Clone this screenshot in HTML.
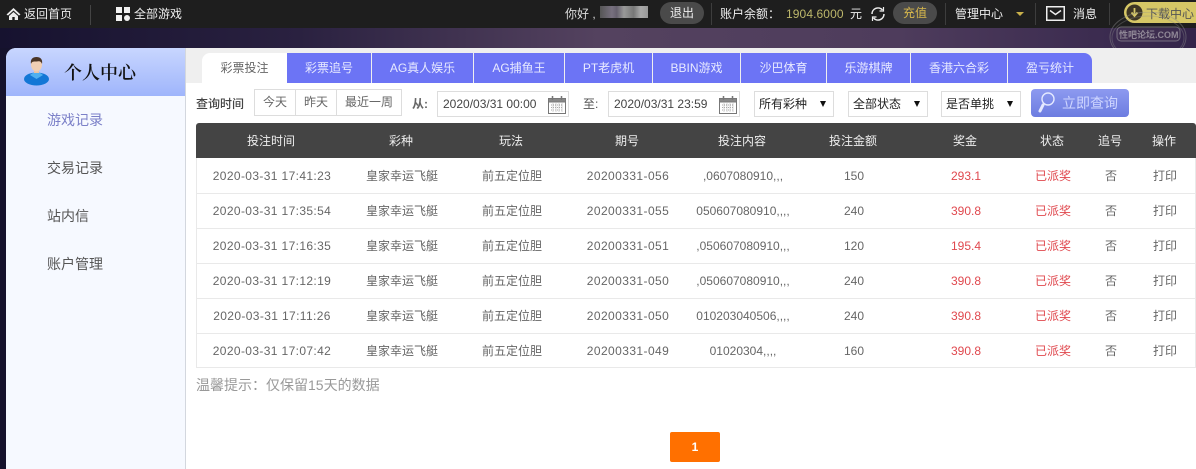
<!DOCTYPE html>
<html lang="zh">
<head>
<meta charset="utf-8">
<style>
*{box-sizing:border-box;margin:0;padding:0}
html,body{width:1196px;height:469px;overflow:hidden}
body{position:relative;background:#fff;font-family:"Liberation Sans","Noto Sans CJK SC",sans-serif;font-size:12px;color:#555}
.a{position:absolute;white-space:nowrap}
#top{left:0;top:0;width:1196px;height:28px;background:#1e1e1e}
#band{left:0;top:28px;width:1196px;height:20px;background:linear-gradient(90deg,#16122f 0%,#2a2140 25%,#54425f 50%,#4e3c5c 75%,#33244a 100%)}
#leftdark{left:0;top:48px;width:18px;height:421px;background:#15122c}
#side{left:6px;top:48px;width:180px;height:421px;background:#f6f9ff;border-right:1px solid #d3d7de;border-top-left-radius:10px;overflow:hidden}
#sidehead{left:0;top:0;width:179px;height:48px;background:linear-gradient(180deg,#c8d6ff,#9fb5fb)}
#strip{left:186px;top:48px;width:1010px;height:35px;background:#efefef}
.tab{position:absolute;top:53px;height:30px;background:#6c74f5;color:#e8eaff;line-height:30px;text-align:center;font-size:12px}
.box{position:absolute;top:89px;height:27px;border:1px solid #ddd;background:#fff;line-height:25px;text-align:center;color:#666;font-size:12px}
.sel{position:absolute;top:91px;height:26px;border:1px solid #ddd;background:#fff;line-height:24px;color:#222;font-size:12px;padding-left:4px}
.sel i{position:absolute;right:7px;top:9px;width:0;height:0;border-left:3px solid transparent;border-right:3px solid transparent;border-top:6px solid #111}
#thead{left:196px;top:123px;width:1000px;height:35px;background:#444;border-radius:3px 3px 0 0}
.th{position:absolute;top:133px;color:#eee;font-size:12px;line-height:16px;transform:translateX(-50%);white-space:nowrap}
.line{position:absolute;left:196px;width:1000px;height:1px;background:#e9e9e9}
.td{position:absolute;font-size:12px;line-height:16px;color:#666;transform:translateX(-50%);white-space:nowrap}
.dt{letter-spacing:.37px}
.is{letter-spacing:.42px}
.r{color:#e0484e}
.sm{position:absolute;left:47px;font-size:14px;color:#555;line-height:20px}
</style>
</head>
<body>
<div class="a" id="top"></div>
<div class="a" id="band"></div>
<div class="a" id="leftdark"></div>

<svg class="a" style="left:6px;top:7px" width="15" height="14" viewBox="0 0 15 14"><path d="M7.500 1L0.500 7.500L2 8.500L7.500 3.500L13 8.500L14.500 7.500ZM3 9V13H6.300V10H8.700V13H12V9L7.500 5Z" fill="#eee"/></svg>
<div class="a" style="left:24px;top:6px;color:#eee;line-height:16px">返回首页</div>
<div class="a" style="left:90px;top:5px;width:1px;height:20px;background:#444"></div>
<svg class="a" style="left:116px;top:7px" width="14" height="14"><rect x="0" y="0" width="6" height="6" fill="#f2f2f2"/><rect x="8" y="0" width="6" height="6" fill="#f2f2f2"/><rect x="0" y="8" width="6" height="6" fill="#f2f2f2"/><circle cx="11" cy="11" r="3" fill="#f2f2f2"/></svg>
<div class="a" style="left:134px;top:6px;color:#eee;line-height:16px">全部游戏</div>

<div class="a" style="left:565px;top:6px;color:#ddd;line-height:16px">你好 ,</div>
<div class="a" style="left:600px;top:6px;width:48px;height:12px;background:linear-gradient(90deg,#555,#77707f 25%,#66606e 35%,#999 50%,#777 70%,#aaa 85%,#999)"></div>
<div class="a" style="left:660px;top:2px;width:44px;height:22px;border-radius:11px;background:#4a4a4a;color:#eee;text-align:center;line-height:22px">退出</div>
<div class="a" style="left:711px;top:3px;width:1px;height:22px;background:#3d3d3d"></div>
<div class="a" style="left:720px;top:6px;color:#eee;line-height:16px">账户余额：</div>
<div class="a" style="left:786px;top:6px;color:#bdb76b;line-height:16px;letter-spacing:.1px">1904.6000</div>
<div class="a" style="left:850px;top:6px;color:#eee;line-height:16px">元</div>
<svg class="a" style="left:870px;top:6px" width="16" height="16" viewBox="0 0 16 16" fill="none" stroke="#eee" stroke-width="1.500"><path d="M2 8A6 6 0 0 1 12.500 4M14 8A6 6 0 0 1 3.500 12"/><path d="M13.500 1V5H9.500M2.500 15V11H6.500" stroke-width="1.200"/></svg>
<div class="a" style="left:893px;top:2px;width:44px;height:22px;border-radius:11px;background:#4a4a4a;color:#d9b94c;text-align:center;line-height:22px">充值</div>
<div class="a" style="left:945px;top:3px;width:1px;height:22px;background:#3d3d3d"></div>
<div class="a" style="left:955px;top:6px;color:#eee;line-height:16px">管理中心</div>
<div class="a" style="left:1016px;top:12px;width:0;height:0;border-left:4px solid transparent;border-right:4px solid transparent;border-top:4px solid #c9b04a"></div>
<div class="a" style="left:1035px;top:3px;width:1px;height:22px;background:#3d3d3d"></div>
<svg class="a" style="left:1046px;top:6px" width="19" height="15" fill="none" stroke="#eee"><rect x="0.750" y="0.750" width="17.500" height="13.500" stroke-width="1.500"/><path d="M4 4.500L9.500 8.500L15 4.500" stroke-width="1.500"/></svg>
<div class="a" style="left:1073px;top:6px;color:#eee;line-height:16px">消息</div>
<div class="a" style="left:1109px;top:3px;width:1px;height:22px;background:#3d3d3d"></div>
<div class="a" style="left:1124px;top:2px;width:72px;height:21px;border-radius:11px 0 0 11px;background:#d6c766"></div>
<svg class="a" style="left:1124px;top:2px" width="21" height="21"><circle cx="10.500" cy="10.500" r="8" fill="#3d3524"/><path d="M10.500 6V13M7.500 10.500L10.500 14L13.500 10.500" stroke="#d6c766" stroke-width="1.800" fill="none"/></svg>
<div class="a" style="left:1146px;top:6px;color:#555;line-height:16px">下载中心</div>
<svg class="a" style="left:1108px;top:12px" width="82" height="54" fill="none" stroke="#8b8b8b" stroke-width="1"><ellipse cx="40" cy="25" rx="38" ry="25" opacity=".45"/><ellipse cx="40" cy="26" rx="36" ry="22" opacity=".35"/><rect x="9" y="15" width="63" height="14" rx="4" fill="#4a3a58" fill-opacity=".4" stroke="#8f8a96" stroke-opacity=".7"/></svg>
<div class="a" style="left:1119px;top:28px;color:#8f8796;font-size:9px;line-height:14px;font-weight:bold">性吧论坛.COM</div>

<div class="a" id="side">
  <div class="a" id="sidehead"></div>
</div>
<svg class="a" style="left:22px;top:55px" width="30" height="31" viewBox="0 0 30 31"><ellipse cx="14.500" cy="24" rx="12.500" ry="6.500" fill="#1377d6"/><path d="M8 20C10 18 12 18 13 17H16C17 18 19 18 21 20L14.500 24Z" fill="#4fb0f0"/><rect x="12" y="13" width="5" height="5" fill="#e8c2a4"/><ellipse cx="14.500" cy="9.500" rx="5.500" ry="7" fill="#f0cfb4"/><path d="M9 9C8 4 11 2 14.500 2C18 2 21 4 20 9C19 6 17 6 14.500 6.500C12 6.500 10 6 9 9Z" fill="#4a3526"/></svg>
<div class="a" style="left:64px;top:60px;font-size:18px;line-height:24px;color:#111;font-weight:600;font-family:'Noto Serif CJK SC','Liberation Serif',serif">个人中心</div>
<div class="sm" style="top:110px;color:#7b80c8">游戏记录</div>
<div class="sm" style="top:158px">交易记录</div>
<div class="sm" style="top:206px">站内信</div>
<div class="sm" style="top:254px">账户管理</div>

<div class="a" id="strip"></div>
<div class="tab" style="left:202px;width:85px;background:#fff;color:#666;border-radius:8px 0 0 0">彩票投注</div>
<div class="tab" style="left:287px;width:84px">彩票追号</div>
<div class="tab" style="left:372px;width:101px">AG真人娱乐</div>
<div class="tab" style="left:474px;width:90px">AG捕鱼王</div>
<div class="tab" style="left:565px;width:87px">PT老虎机</div>
<div class="tab" style="left:653px;width:87px">BBIN游戏</div>
<div class="tab" style="left:741px;width:85px">沙巴体育</div>
<div class="tab" style="left:827px;width:83px">乐游棋牌</div>
<div class="tab" style="left:911px;width:96px">香港六合彩</div>
<div class="tab" style="left:1008px;width:84px;border-radius:0 8px 0 0">盈亏统计</div>

<div class="a" style="left:196px;top:96px;color:#444;line-height:16px;font-weight:500">查询时间</div>
<div class="box" style="left:254px;width:42px">今天</div>
<div class="box" style="left:295px;width:42px">昨天</div>
<div class="box" style="left:336px;width:66px">最近一周</div>
<div class="a" style="left:412px;top:96px;color:#666;line-height:16px;font-weight:bold">从:</div>
<div class="sel" style="left:437px;width:132px;color:#444;padding-left:5px">2020/03/31 00:00</div>
<svg class="a" style="left:547px;top:95px" width="20" height="19" fill="none" stroke="#777"><rect x="1.500" y="3.500" width="17" height="15"/><path d="M1.500 3.500H18.500V7H1.500Z" fill="#888"/><path d="M5.500 1V5M14.500 1V5" stroke-width="1.500"/><path d="M4 10H16M4 12.500H16M4 15H16M6 8.500V17M9 8.500V17M12 8.500V17M15 8.500V17" stroke="#aaa" stroke-dasharray="1 1"/></svg>
<div class="a" style="left:583px;top:96px;color:#555;line-height:16px">至:</div>
<div class="sel" style="left:608px;width:132px;color:#444;padding-left:5px">2020/03/31 23:59</div>
<svg class="a" style="left:718px;top:95px" width="20" height="19" fill="none" stroke="#777"><rect x="1.500" y="3.500" width="17" height="15"/><path d="M1.500 3.500H18.500V7H1.500Z" fill="#888"/><path d="M5.500 1V5M14.500 1V5" stroke-width="1.500"/><path d="M4 10H16M4 12.500H16M4 15H16M6 8.500V17M9 8.500V17M12 8.500V17M15 8.500V17" stroke="#aaa" stroke-dasharray="1 1"/></svg>
<div class="sel" style="left:754px;width:80px">所有彩种<i></i></div>
<div class="sel" style="left:848px;width:80px">全部状态<i></i></div>
<div class="sel" style="left:941px;width:80px">是否单挑<i></i></div>
<div class="a" style="left:1031px;top:89px;width:98px;height:28px;border-radius:4px;background:linear-gradient(180deg,#8d9af0,#6c7ce0);color:#cfd6ff;font-size:14px;line-height:28px;padding-left:31px">立即查询</div>
<svg class="a" style="left:1037px;top:91px" width="20" height="24" fill="none"><circle cx="11" cy="8" r="6" stroke="#e4e9ff" stroke-width="1.400"/><path d="M6 14L3 20" stroke="#e4e9ff" stroke-width="3" stroke-linecap="round"/></svg>

<div class="a" id="thead"></div>
<div class="th" style="left:271px">投注时间</div>
<div class="th" style="left:401px">彩种</div>
<div class="th" style="left:511px">玩法</div>
<div class="th" style="left:627px">期号</div>
<div class="th" style="left:742px">投注内容</div>
<div class="th" style="left:853px">投注金额</div>
<div class="th" style="left:965px">奖金</div>
<div class="th" style="left:1052px">状态</div>
<div class="th" style="left:1110px">追号</div>
<div class="th" style="left:1164px">操作</div>

<div class="a" style="left:196px;top:158px;width:1px;height:210px;background:#e9e9e9"></div>
<div class="a" style="left:1195px;top:158px;width:1px;height:210px;background:#e9e9e9"></div>
<div class="line" style="top:193px"></div>
<div class="line" style="top:228px"></div>
<div class="line" style="top:263px"></div>
<div class="line" style="top:298px"></div>
<div class="line" style="top:333px"></div>
<div class="line" style="top:367px"></div>

<div class="td dt" style="left:272px;top:168px">2020-03-31 17:41:23</div><div class="td" style="left:402px;top:168px">皇家幸运飞艇</div><div class="td" style="left:512px;top:168px">前五定位胆</div><div class="td is" style="left:628px;top:168px">20200331-056</div><div class="td" style="left:743px;top:168px">,0607080910,,,</div><div class="td" style="left:854px;top:168px">150</div><div class="td r" style="left:966px;top:168px">293.1</div><div class="td r" style="left:1053px;top:168px">已派奖</div><div class="td" style="left:1111px;top:168px">否</div><div class="td" style="left:1165px;top:168px">打印</div>

<div class="td dt" style="left:272px;top:203px">2020-03-31 17:35:54</div><div class="td" style="left:402px;top:203px">皇家幸运飞艇</div><div class="td" style="left:512px;top:203px">前五定位胆</div><div class="td is" style="left:628px;top:203px">20200331-055</div><div class="td" style="left:743px;top:203px">050607080910,,,,</div><div class="td" style="left:854px;top:203px">240</div><div class="td r" style="left:966px;top:203px">390.8</div><div class="td r" style="left:1053px;top:203px">已派奖</div><div class="td" style="left:1111px;top:203px">否</div><div class="td" style="left:1165px;top:203px">打印</div>

<div class="td dt" style="left:272px;top:238px">2020-03-31 17:16:35</div><div class="td" style="left:402px;top:238px">皇家幸运飞艇</div><div class="td" style="left:512px;top:238px">前五定位胆</div><div class="td is" style="left:628px;top:238px">20200331-051</div><div class="td" style="left:743px;top:238px">,050607080910,,,</div><div class="td" style="left:854px;top:238px">120</div><div class="td r" style="left:966px;top:238px">195.4</div><div class="td r" style="left:1053px;top:238px">已派奖</div><div class="td" style="left:1111px;top:238px">否</div><div class="td" style="left:1165px;top:238px">打印</div>

<div class="td dt" style="left:272px;top:273px">2020-03-31 17:12:19</div><div class="td" style="left:402px;top:273px">皇家幸运飞艇</div><div class="td" style="left:512px;top:273px">前五定位胆</div><div class="td is" style="left:628px;top:273px">20200331-050</div><div class="td" style="left:743px;top:273px">,050607080910,,,</div><div class="td" style="left:854px;top:273px">240</div><div class="td r" style="left:966px;top:273px">390.8</div><div class="td r" style="left:1053px;top:273px">已派奖</div><div class="td" style="left:1111px;top:273px">否</div><div class="td" style="left:1165px;top:273px">打印</div>

<div class="td dt" style="left:272px;top:308px">2020-03-31 17:11:26</div><div class="td" style="left:402px;top:308px">皇家幸运飞艇</div><div class="td" style="left:512px;top:308px">前五定位胆</div><div class="td is" style="left:628px;top:308px">20200331-050</div><div class="td" style="left:743px;top:308px">010203040506,,,,</div><div class="td" style="left:854px;top:308px">240</div><div class="td r" style="left:966px;top:308px">390.8</div><div class="td r" style="left:1053px;top:308px">已派奖</div><div class="td" style="left:1111px;top:308px">否</div><div class="td" style="left:1165px;top:308px">打印</div>

<div class="td dt" style="left:272px;top:343px">2020-03-31 17:07:42</div><div class="td" style="left:402px;top:343px">皇家幸运飞艇</div><div class="td" style="left:512px;top:343px">前五定位胆</div><div class="td is" style="left:628px;top:343px">20200331-049</div><div class="td" style="left:743px;top:343px">01020304,,,,</div><div class="td" style="left:854px;top:343px">160</div><div class="td r" style="left:966px;top:343px">390.8</div><div class="td r" style="left:1053px;top:343px">已派奖</div><div class="td" style="left:1111px;top:343px">否</div><div class="td" style="left:1165px;top:343px">打印</div>

<div class="a" style="left:196px;top:376px;font-size:14px;line-height:18px;color:#999">温馨提示：仅保留15天的数据</div>
<div class="a" style="left:670px;top:432px;width:50px;height:30px;background:#ff7000;border-radius:2px;color:#fff;text-align:center;line-height:30px;font-size:12px;font-weight:bold">1</div>
</body>
</html>
